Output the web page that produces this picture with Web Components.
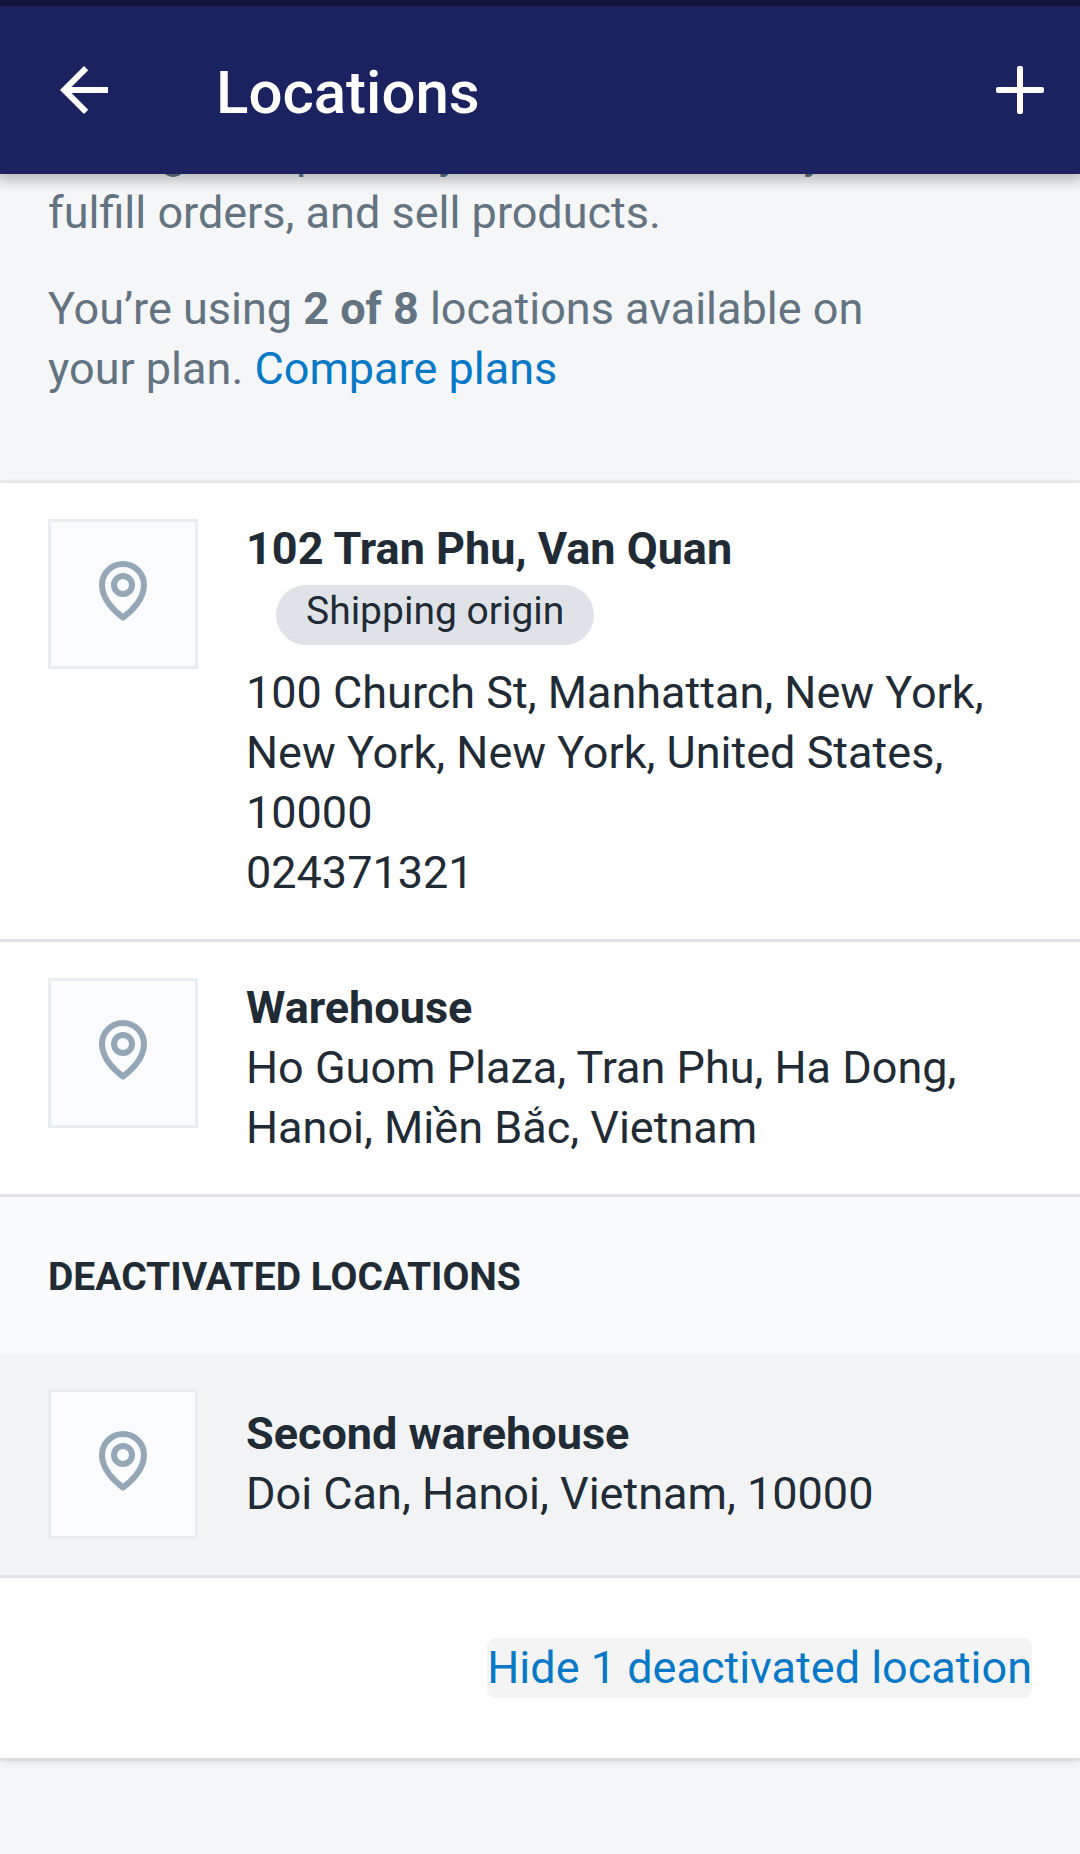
<!DOCTYPE html>
<html lang="en">
<head>
<meta charset="utf-8">
<meta name="viewport" content="width=device-width, initial-scale=1">
<title>Locations</title>
<style>
  body {
    margin: 0;
    background: #f4f6f8;
    color: #212b36;
    font: 400 45px/60px Roboto, "Noto Sans", sans-serif;
  }
</style>
</head>
<body>
<locations-page></locations-page>

<template id="page-template">
  <style>
    :host { display: block; box-sizing: border-box; min-height: 100vh; padding-bottom: 96px; }
    .more { color: #0578c6; text-decoration: none; }
    strong { font-weight: 700; }
  </style>
  <app-bar>Locations</app-bar>
  <main>
    <page-intro>
      <p>Manage the places you stock inventory, fulfill orders, and sell products.</p>
      <p>You’re using <strong>2 of 8</strong> locations available on your plan. <a class="more" href="#plans">Compare plans</a></p>
    </page-intro>
    <location-card>
      <location-item name="102 Tran Phu, Van Quan">
        <status-badge slot="badge">Shipping origin</status-badge>
        100 Church St, Manhattan, New York, New York, New York, United States, 10000<br>024371321
      </location-item>
      <location-item name="Warehouse">Ho Guom Plaza, Tran Phu, Ha Dong, Hanoi, Miền Bắc, Vietnam</location-item>
      <section-title>Deactivated locations</section-title>
      <location-item name="Second warehouse" deactivated>Doi Can, Hanoi, Vietnam, 10000</location-item>
      <plain-button slot="footer">Hide 1 deactivated location</plain-button>
    </location-card>
  </main>
</template>

<template id="bar-template">
  <style>
    :host { display: block; position: relative; z-index: 1; color: #fff; background: #1c2260; border-top: 6px solid #10133a; box-shadow: 0 3px 12px 4px rgba(0, 0, 0, .24); }
    header { display: flex; align-items: center; padding: 48px 24px 48px 48px; }
    button { flex: none; display: block; width: 72px; height: 72px; padding: 0; border: 0; background: none; color: inherit; }
    svg { display: block; width: 72px; height: 72px; }
    h1 { flex: 1; margin: 0 0 0 96px; padding-top: 6px; font-size: 60px; line-height: 66px; font-weight: 500; }
  </style>
  <header>
    <button type="button" aria-label="Back">
      <svg viewBox="0 0 24 24" fill="currentColor"><path d="M20 11H7.83l5.59-5.59L12 4l-8 8 8 8 1.41-1.41L7.83 13H20v-2z"/></svg>
    </button>
    <h1><slot></slot></h1>
    <button type="button" aria-label="Add location">
      <svg viewBox="0 0 72 72" fill="currentColor"><rect x="12" y="33" width="48" height="6" rx="2"/><rect x="33" y="12" width="6" height="48" rx="2"/></svg>
    </button>
  </header>
</template>

<template id="intro-template">
  <style>
    /* The page is scrolled so the first line sits behind the app bar. */
    :host { display: block; margin-top: -51px; padding: 0 150px 84px 48px; color: #637381; }
    ::slotted(p) { margin: 0 0 36px; }
    ::slotted(p:last-of-type) { margin: 0; }
  </style>
  <slot></slot>
</template>

<template id="card-template">
  <style>
    :host { display: block; background: #fff; box-shadow: 0 0 0 3px rgba(63, 63, 68, .05), 0 3px 9px rgba(63, 63, 68, .15); }
    ::slotted(location-item:not(:first-child)) { border-top: 3px solid #dfe3e8; }
    ::slotted(location-item[deactivated]:not(:first-child)) { border-top: 0; }
    footer { display: flex; justify-content: flex-end; padding: 60px 48px; border-top: 3px solid #dfe3e8; }
  </style>
  <slot></slot>
  <footer><slot name="footer"></slot></footer>
</template>

<template id="item-template">
  <style>
    :host { display: block; }
    :host([deactivated]) { background: #f1f3f5; }
    article { display: flex; gap: 48px; padding: 36px 48px; }
    .thumb { flex: none; box-sizing: border-box; width: 150px; height: 150px; padding: 39px 42px 45px; border: 3px solid #e8eef0; background: #fafbfd; }
    svg { display: block; width: 60px; height: 60px; }
    .text { flex: 1; min-width: 0; }
    :host([deactivated]) .text { align-self: center; }
    h2 { margin: 0; font-size: 45px; line-height: 60px; font-weight: 700; }
    p { margin: 0; }
  </style>
  <article>
    <div class="thumb">
      <svg viewBox="0 0 60 60" fill="none" stroke="#95a7b7" stroke-width="6" stroke-linejoin="round"><path d="M30 56.500C21 50 9 38 9 24A21 21 0 0 1 51 24C51 38 39 50 30 56.500Z"/><circle cx="30" cy="24" r="9"/></svg>
    </div>
    <div class="text">
      <h2></h2>
      <slot name="badge"></slot>
      <p><slot></slot></p>
    </div>
  </article>
</template>

<template id="badge-template">
  <style>
    :host { display: block; padding: 6px 0 18px 30px; }
    span { display: inline-block; vertical-align: top; padding: 2px 30px 10px; border-radius: 30px; background: #dfe3e8; font-size: 39px; line-height: 48px; }
  </style>
  <span><slot></slot></span>
</template>

<template id="section-template">
  <style>
    :host { display: block; padding: 56px 48px 52px; border-top: 3px solid #dfe3e8; background: #f9fafc; }
    h3 { margin: 0; font-size: 39px; line-height: 48px; font-weight: 700; text-transform: uppercase; }
  </style>
  <h3><slot></slot></h3>
</template>

<template id="button-template">
  <style>
    :host { display: block; }
    button { display: block; padding: 0; border: 0; border-radius: 9px; background: #f4f4f4; color: #0578c6; font: inherit; }
  </style>
  <button type="button"><slot></slot></button>
</template>

<script>
  class TemplateElement extends HTMLElement {
    constructor() {
      super();
      const template = document.getElementById(this.constructor.template);
      this.attachShadow({ mode: "open" }).append(template.content.cloneNode(true));
    }
  }

  class AppBar extends TemplateElement { static template = "bar-template"; }
  class PageIntro extends TemplateElement { static template = "intro-template"; }
  class LocationCard extends TemplateElement { static template = "card-template"; }
  class StatusBadge extends TemplateElement { static template = "badge-template"; }
  class SectionTitle extends TemplateElement { static template = "section-template"; }
  class PlainButton extends TemplateElement { static template = "button-template"; }
  class LocationsPage extends TemplateElement { static template = "page-template"; }

  class LocationItem extends TemplateElement {
    static template = "item-template";
    connectedCallback() {
      this.shadowRoot.querySelector("h2").textContent = this.getAttribute("name");
    }
  }

  customElements.define("app-bar", AppBar);
  customElements.define("page-intro", PageIntro);
  customElements.define("location-card", LocationCard);
  customElements.define("status-badge", StatusBadge);
  customElements.define("section-title", SectionTitle);
  customElements.define("plain-button", PlainButton);
  customElements.define("location-item", LocationItem);
  customElements.define("locations-page", LocationsPage);
</script>
</body>
</html>
